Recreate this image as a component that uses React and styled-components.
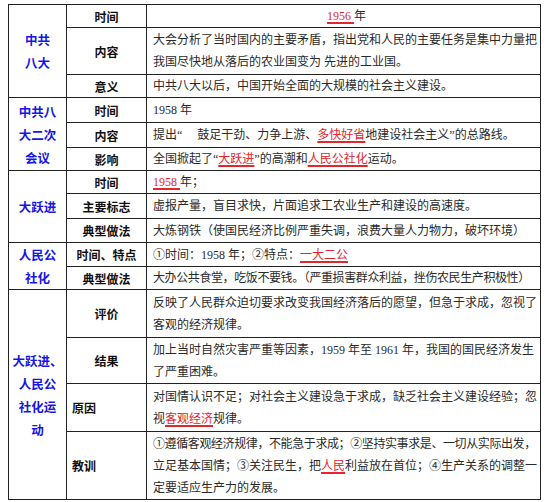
import React from "react";
import styled, { createGlobalStyle } from "styled-components";

const GlobalStyle = createGlobalStyle`
  html, body {
    margin: 0;
    padding: 0;
    background: #ffffff;
  }
`;

// a line starting with "~" is set a little tighter so it fits the cell
const rows = [
  { group: "中共\n八大", span: 3, label: "时间", h: 23, center: true, text: [[{ red: "1956 " }, "年"]] },
  { label: "内容", h: 47, text: [["大会分析了当时国内的主要矛盾，指出党和人民的主要任务是集中力量把"], ["我国尽快地从落后的农业国变为 先进的工业国。"]] },
  { label: "意义", h: 23, text: [["中共八大以后，中国开始全面的大规模的社会主义建设。"]] },
  { group: "中共八\n大二次\n会议", span: 3, label: "时间", h: 25, text: [["1958 年"]] },
  { label: "内容", h: 25, text: [["提出“ 　鼓足干劲、力争上游、", { red: "多快好省" }, "地建设社会主义”的总路线。"]] },
  { label: "影响", h: 23, text: [["全国掀起了“", { red: "大跃进" }, "”的高潮和", { red: "人民公社化" }, "运动。"]] },
  { group: "大跃进", span: 3, label: "时间", h: 23, text: [[{ red: "1958 " }, "年；"]] },
  { label: "主要标志", h: 25, text: [["虚报产量，盲目求快，片面追求工农业生产和建设的高速度。"]] },
  { label: "典型做法", h: 24, text: [["大炼钢铁（使国民经济比例严重失调，浪费大量人力物力，破坏环境）"]] },
  { group: "人民公\n社化", span: 2, label: "时间、特点", h: 24, text: [["①时间：1958 年；②特点：", { red: "一大二公" }]] },
  { label: "典型做法", h: 23, text: [["~", "大办公共食堂，吃饭不要钱。（严重损害群众利益，挫伤农民生产积极性）"]] },
  { group: "大跃进、\n人民公\n社化运\n动", span: 4, label: "评价", h: 48, text: [["反映了人民群众迫切要求改变我国经济落后的愿望，但急于求成，忽视了"], ["客观的经济规律。"]] },
  { label: "结果", h: 46, text: [["加上当时自然灾害严重等因素，1959 年至 1961 年，我国的国民经济发生"], ["了严重困难。"]] },
  { label: "原因", h: 48, left: true, text: [["对国情认识不足；对社会主义建设急于求成，缺乏社会主义建设经验；忽"], ["视", { red: "客观经济" }, "规律。"]] },
  { label: "教训", h: 68, left: true, text: [["~", "①遵循客观经济规律，不能急于求成；②坚持实事求是、一切从实际出发，"], ["立足基本国情；③关注民生，把", { red: "人民" }, "利益放在首位；④生产关系的调整一"], ["定要适应生产力的发展。"]] },
];

const App = () => {
  return (
    <Page>
      <GlobalStyle />
      <Table>
        <colgroup>
          <col style={{ width: 58 }} />
          <col style={{ width: 80 }} />
          <col />
        </colgroup>
        <tbody>
          {rows.map((row, i) => (
            <Row key={i} $h={row.h}>
              {row.group && (
                <GroupCell rowSpan={row.span}>
                  {row.group.split("\n").map((line, j) => (
                    <div key={j}>{line}</div>
                  ))}
                </GroupCell>
              )}
              <LabelCell $left={row.left}>{row.label}</LabelCell>
              <TextCell $center={row.center}>
                {row.text.map((line, j) => {
                  const tight = line[0] === "~";
                  const parts = tight ? line.slice(1) : line;
                  return (
                    <Line key={j} $tight={tight}>
                      {parts.map((part, k) =>
                        typeof part === "string" ? (
                          <React.Fragment key={k}>{part}</React.Fragment>
                        ) : (
                          <Red key={k}>{part.red}</Red>
                        )
                      )}
                    </Line>
                  );
                })}
              </TextCell>
            </Row>
          ))}
        </tbody>
      </Table>
    </Page>
  );
};

export default App;

const Page = styled.div`
  padding: 4px 0 0 8px;
  width: 548px;
  height: 502px;
  box-sizing: border-box;
  overflow: hidden;
`;

const Table = styled.table`
  width: 533px;
  border-collapse: collapse;
  table-layout: fixed;
  border: 1.5px solid #111;
`;

const Row = styled.tr`
  height: ${(p) => p.$h}px;
`;

const GroupCell = styled.td`
  border: 1px solid #222;
  text-align: center;
  vertical-align: middle;
  padding: 0;
  color: #1515e6;
  font-family: "Noto Sans CJK SC", sans-serif;
  font-weight: 700;
  font-size: 12.5px;
  line-height: 23px;
`;

const LabelCell = styled.td`
  border: 1px solid #222;
  text-align: ${(p) => (p.$left ? "left" : "center")};
  vertical-align: middle;
  padding: 0 0 0 ${(p) => (p.$left ? "5px" : "0")};
  color: #111;
  font-family: "Noto Sans CJK SC", sans-serif;
  font-weight: 700;
  font-size: 12px;
`;

const TextCell = styled.td`
  border: 1px solid #222;
  text-align: ${(p) => (p.$center ? "center" : "left")};
  vertical-align: middle;
  padding: 0 0 0 6px;
  color: #2a2a2a;
  font-family: "Liberation Serif", "Noto Sans CJK SC", serif;
  font-size: 12px;
  line-height: 22px;
  white-space: nowrap;
  overflow: hidden;
`;

const Line = styled.div`
  letter-spacing: ${(p) => (p.$tight ? "-0.4px" : "0")};
`;

const Red = styled.span`
  color: #e3262c;
  text-decoration: underline;
  text-decoration-color: #e3262c;
  text-decoration-thickness: 1.5px;
  text-underline-offset: 2px;
`;
